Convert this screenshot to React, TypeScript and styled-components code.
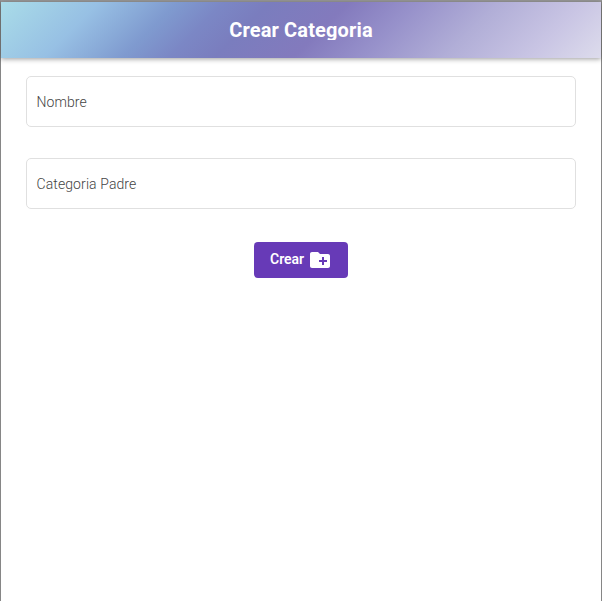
import React from "react";
import styled, { createGlobalStyle } from "styled-components";

const GlobalStyle = createGlobalStyle`
  * { box-sizing: border-box; }
  html, body { margin: 0; height: 100%; background: #fff; }
  body { font-family: Roboto, "Liberation Sans", sans-serif; overflow: hidden; }
`;

const Page = styled.div`
  display: flex;
  flex-direction: column;
  height: 601px;
  width: 602px;
  border: solid #868686;
  border-width: 2px 1px 0;
  border-top-color: #9b9b9b;
  background: #fff;
`;

const Toolbar = styled.header`
  display: flex;
  align-items: center;
  justify-content: center;
  flex: none;
  height: 56px;
  background: linear-gradient(
    135deg,
    #a9dce8 0%,
    #97c0e4 15%,
    #7f9acf 27%,
    #7b87c5 34%,
    #7a7dbe 41%,
    #837abd 53%,
    #9690ca 63%,
    #b1aed7 76%,
    #c9c5e4 89%,
    #dddcec 100%
  );
  box-shadow: 0 1px 5px rgba(0, 0, 0, 0.4);
`;

const Title = styled.h1`
  margin: 0;
  height: 20px;
  overflow: hidden;
  color: #fff;
  font-size: 20px;
  font-weight: 700;
  letter-spacing: 0.15px;
  line-height: 20px;
  white-space: nowrap;
`;

const Form = styled.form`
  display: flex;
  flex-direction: column;
  padding: 18px 25px 0;
`;

const Field = styled.label`
  display: flex;
  align-items: center;
  height: 51px;
  margin-bottom: 31px;
  padding: 1px 10px 0 9.5px;
  border: 1px solid #e0e0e0;
  border-radius: 5px;
  color: #444;
  font-size: 14px;
  font-weight: 300;
  letter-spacing: 0.1px;
  line-height: 16px;
`;

const SubmitButton = styled.button`
  display: flex;
  align-items: center;
  align-self: center;
  width: 94px;
  height: 36px;
  margin-top: 2px;
  padding: 0 16px;
  gap: 4px;
  border: 0;
  border-radius: 4px;
  background: #673ab7;
  color: #fff;
  font: 600 14px/34px Roboto, sans-serif;
`;

const ButtonText = styled.span`
  height: 36px;
`;

const FolderIcon = styled.svg`
  flex: none;
  width: 24px;
  height: 24px;
  fill: currentColor;
`;

export default function App() {
  return (
    <>
      <GlobalStyle />
      <Page>
        <Toolbar>
          <Title>Crear Categoria</Title>
        </Toolbar>
        <Form>
          <Field>Nombre</Field>
          <Field>Categoria Padre</Field>
          <SubmitButton type="button">
            <ButtonText>Crear</ButtonText>
            <FolderIcon viewBox="0 0 24 24">
              <path d="M20 6h-8l-2-2H4c-1.11 0-1.99.89-1.99 2L2 18c0 1.11.89 2 2 2h16c1.11 0 2-.89 2-2V8c0-1.11-.89-2-2-2zm-1 8h-3v3h-2v-3h-3v-2h3V9h2v3h3v2z" />
            </FolderIcon>
          </SubmitButton>
        </Form>
      </Page>
    </>
  );
}
